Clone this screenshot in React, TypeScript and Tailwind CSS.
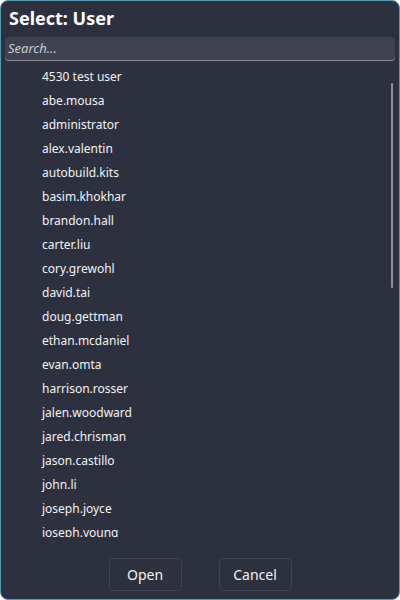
import React from "react";

const users = [
  "4530 test user",
  "abe.mousa",
  "administrator",
  "alex.valentin",
  "autobuild.kits",
  "basim.khokhar",
  "brandon.hall",
  "carter.liu",
  "cory.grewohl",
  "david.tai",
  "doug.gettman",
  "ethan.mcdaniel",
  "evan.omta",
  "harrison.rosser",
  "jalen.woodward",
  "jared.chrisman",
  "jason.castillo",
  "john.li",
  "joseph.joyce",
  "joseph.young",
  "kevin.park",
  "lisa.moore",
];

const App = () => {
  return (
    <div
      className="w-[400px] h-[600px] bg-[#2d303f] border border-[#4f9bb3] rounded-[8px] flex flex-col overflow-hidden text-[#f2f2f4]"
      style={{ fontFamily: '"Noto Sans", "Open Sans", sans-serif' }}
    >
      <h1 className="px-[8px] pt-[5px] text-[18px] leading-[24px] font-bold text-white">Select: User</h1>

      <div className="mx-[4px] mt-[7px] h-[24px] bg-[#3e4151] rounded-[4px] border-b border-[#8b8d9a] flex items-center px-[3px]">
        <span className="italic text-[13px] text-[#c9cad2]">Search...</span>
      </div>

      <div className="relative mt-[4px] h-[472px] overflow-hidden">
        <ul className="flex flex-col">
          {users.map((u) => (
            <li key={u} className="h-[24px] flex items-center pl-[41px] text-[12px]">
              {u}
            </li>
          ))}
        </ul>
        <div className="absolute right-[6px] top-[18px] w-[2px] h-[205px] rounded-full bg-[#8e909d]" />
      </div>

      <div className="flex justify-center gap-[37px] mt-[21px]">
        <button className="w-[73px] h-[33px] rounded-[4px] border border-[#3f4252] text-[14px] text-[#f2f2f4]">
          Open
        </button>
        <button className="w-[73px] h-[33px] rounded-[4px] border border-[#3f4252] text-[14px] text-[#f2f2f4]">
          Cancel
        </button>
      </div>
    </div>
  );
};

export default App;
